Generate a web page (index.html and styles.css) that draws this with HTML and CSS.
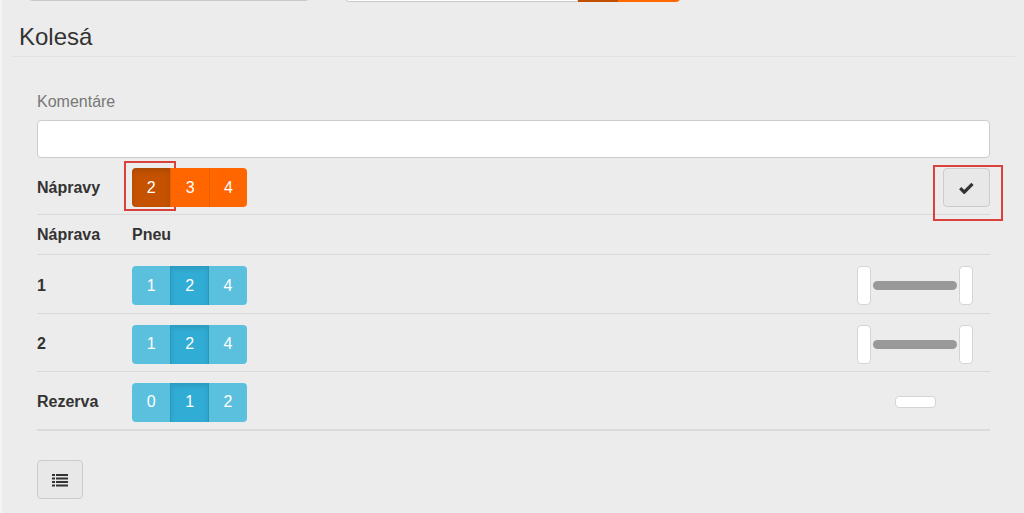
FILE: index.html
```html
<!DOCTYPE html>
<html lang="sk">
<head>
  <meta charset="UTF-8" />
  <meta name="viewport" content="width=device-width, initial-scale=1.0"/>
  <title>Kolesá</title>
  <link rel="stylesheet" href="styles.css">
</head>
<body>
  <div class="panel">

    <div class="top-row">
      <div class="top-input first"></div>
      <div class="top-group">
        <div class="top-input second"></div>
        <div class="top-btn dark"></div>
        <div class="top-btn"></div>
      </div>
    </div>

    <h2 class="section-title">Kolesá</h2>

    <div class="form">
      <label class="field-label">Komentáre</label>
      <input type="text" class="comment-input" />

      <div class="row axles-row">
        <div class="cell-label">Nápravy</div>
        <div class="btn-group orange">
          <button class="active marked">2</button>
          <button>3</button>
          <button>4</button>
        </div>
        <div class="row-end">
          <button class="btn-default check-btn marked-wide">
            <svg width="15" height="12" viewBox="0 0 15 12"><path d="M1.2 6.2 L5.2 10.2 L13.5 1.8" fill="none" stroke="#333" stroke-width="3.2"/></svg>
          </button>
        </div>
      </div>

      <div class="row head-row">
        <div class="cell-label">Náprava</div>
        <div class="cell-label">Pneu</div>
      </div>

      <div class="row body-row">
        <div class="cell-label">1</div>
        <div class="btn-group blue">
          <button>1</button>
          <button class="active">2</button>
          <button>4</button>
        </div>
        <div class="row-end">
          <div class="axle">
            <span class="wheel"></span>
            <span class="shaft"></span>
            <span class="wheel"></span>
          </div>
        </div>
      </div>

      <div class="row body-row short">
        <div class="cell-label">2</div>
        <div class="btn-group blue">
          <button>1</button>
          <button class="active">2</button>
          <button>4</button>
        </div>
        <div class="row-end">
          <div class="axle">
            <span class="wheel"></span>
            <span class="shaft"></span>
            <span class="wheel"></span>
          </div>
        </div>
      </div>

      <div class="row body-row last">
        <div class="cell-label">Rezerva</div>
        <div class="btn-group blue">
          <button>0</button>
          <button class="active">1</button>
          <button>2</button>
        </div>
        <div class="row-end">
          <div class="axle spare-box">
            <span class="spare"></span>
          </div>
        </div>
      </div>

      <button class="btn-default list-btn">
        <svg width="16" height="14" viewBox="0 0 16 14">
          <rect x="0" y="1" width="3" height="2" fill="#333"/>
          <rect x="4" y="1" width="12" height="2" fill="#333"/>
          <rect x="0" y="4.5" width="3" height="2" fill="#333"/>
          <rect x="4" y="4.5" width="12" height="2" fill="#333"/>
          <rect x="0" y="8" width="3" height="2" fill="#333"/>
          <rect x="4" y="8" width="12" height="2" fill="#333"/>
          <rect x="0" y="11.5" width="3" height="2" fill="#333"/>
          <rect x="4" y="11.5" width="12" height="2" fill="#333"/>
        </svg>
      </button>
    </div>

  </div>
</body>
</html>
```

FILE: styles.css
```css
html, body {
  margin: 0;
  padding: 0;
  background: #ececec;
  font-family: "Liberation Sans", Arial, sans-serif;
  font-size: 14px;
  color: #333;
}

.panel {
  min-height: 513px;
  border-left: 2px solid #f4f4f4;
  box-sizing: border-box;
  overflow: hidden;
}

/* cut-off controls of the section above */
.top-row {
  display: flex;
  margin-top: -38px;
  padding-left: 26px;
  gap: 35px;
}

.top-input {
  height: 40px;
  background: #fff;
  border: 1px solid #c8c8c8;
  border-radius: 4px;
  box-sizing: border-box;
}

.top-input.first {
  width: 282px;
  margin-top: -1px;
}

.top-group {
  display: flex;
}

.top-input.second {
  width: 233px;
  border-radius: 4px 0 0 4px;
}

.top-btn {
  width: 62px;
  height: 40px;
  background: #ff6a00;
  border-radius: 0 4px 4px 0;
}

.top-btn.dark {
  width: 40px;
  background: #c04f00;
  border-radius: 0;
}

.section-title {
  margin: 21px 0 0 10px;
  width: 996px;
  padding: 0 0 5px 7px;
  font-size: 24px;
  font-weight: normal;
  line-height: 28px;
  color: #333;
  border-bottom: 1px solid #e2e2e2;
}

.form {
  margin: 35px 0 0 35px;
  width: 953px;
}

.field-label {
  display: block;
  color: #777;
  font-size: 16px;
  line-height: 20px;
  margin-bottom: 8px;
}

.comment-input {
  display: block;
  width: 100%;
  height: 38px;
  box-sizing: border-box;
  border: 1px solid #ccc;
  border-radius: 4px;
  background: #fff;
  margin: 0;
}

.row {
  display: flex;
  align-items: center;
  border-bottom: 1px solid #dadada;
  box-sizing: border-box;
}

.axles-row {
  height: 57px;
  padding-top: 3px;
}

.head-row {
  height: 40px;
}

.body-row {
  height: 59px;
  padding-top: 3px;
}

.body-row.short {
  height: 58px;
}

.body-row.last {
  border-bottom: 2px solid #dadada;
}

.cell-label {
  width: 95px;
  font-weight: bold;
  font-size: 16px;
}

.btn-group {
  display: flex;
  border-radius: 4px;
}

.btn-group button {
  position: relative;
  width: 38.4px;
  height: 39px;
  border: 0;
  margin: 0;
  padding: 0;
  font-family: "Liberation Sans", Arial, sans-serif;
  font-size: 16px;
  color: #fff;
}

.btn-group button:first-child {
  border-radius: 4px 0 0 4px;
}

.btn-group button:last-child {
  border-radius: 0 4px 4px 0;
}

.orange button {
  background: #ff6600;
  border-left: 1px solid #e85d00;
}

.orange button:first-child {
  border-left: 0;
}

.orange button.active {
  background: #c45200;
  box-shadow: inset 0 3px 5px rgba(0, 0, 0, 0.12);
}

.blue button {
  background: #5bc0de;
}

.blue button.active {
  background: #31acd4;
  border-left: 1px solid #269abc;
  border-right: 1px solid #269abc;
  box-shadow: inset 0 3px 5px rgba(0, 0, 0, 0.1);
}

/* red highlight frames drawn over the buttons */
.marked::after {
  content: "";
  position: absolute;
  left: -8px;
  top: -7px;
  width: 48px;
  height: 46px;
  border: 2px solid #d9413b;
}

.row-end {
  margin-left: auto;
  display: flex;
  align-items: center;
}

.btn-default {
  position: relative;
  background: #e8e8e8;
  border: 1px solid #ccc;
  border-radius: 4px;
  height: 39px;
  width: 47px;
  display: flex;
  align-items: center;
  justify-content: center;
  padding: 0;
}

.marked-wide::after {
  content: "";
  position: absolute;
  left: -11px;
  top: -4px;
  width: 66px;
  height: 52px;
  border: 2px solid #d9413b;
}

.axle {
  display: flex;
  align-items: center;
  width: 116px;
  margin-right: 17px;
  justify-content: space-between;
}

.wheel {
  width: 14px;
  height: 39px;
  background: #fff;
  border: 1px solid #d4d4d4;
  border-radius: 4px;
  box-sizing: border-box;
}

.shaft {
  width: 84px;
  height: 9px;
  background: #999;
  border-radius: 5px;
}

.spare-box {
  justify-content: center;
  height: 39px;
}

.spare {
  width: 41px;
  height: 12px;
  background: #fff;
  border: 1px solid #d4d4d4;
  border-radius: 4px;
  box-sizing: border-box;
}

.list-btn {
  margin-top: 29px;
  width: 46px;
}
```
